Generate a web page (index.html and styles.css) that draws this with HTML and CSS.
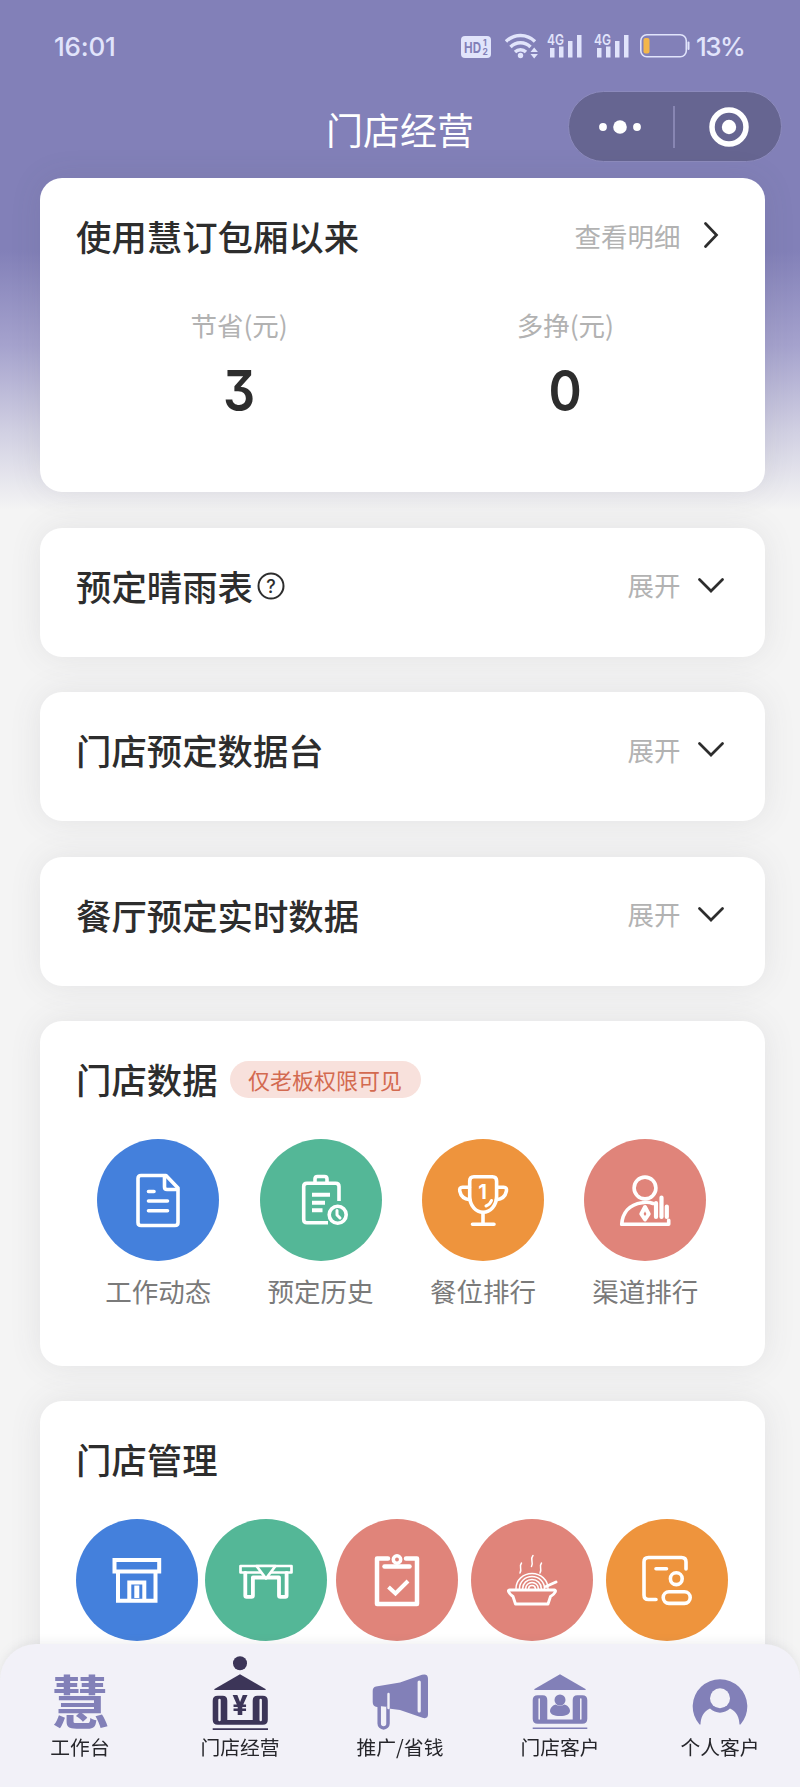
FILE: index.html
```html
<!DOCTYPE html>
<html lang="zh-CN">

<head>
    <meta charset="UTF-8">
    <title>门店经营</title>
    <link rel="stylesheet" href="styles.css">
</head>

<body>
    <header>
        <div class="status-bar">
            <span class="clock">16:01</span>
            <div class="status-icons">
                <svg class="hd" width="30" height="22" viewBox="0 0 30 22">
                    <rect width="30" height="22" rx="4" fill="#e1e4fb" />
                    <text x="3" y="16.5" font-size="15" font-weight="700" textLength="17" lengthAdjust="spacingAndGlyphs">HD</text>
                    <text x="22" y="10" font-size="8.5" font-weight="700">1</text>
                    <text x="21.5" y="19" font-size="8.5" font-weight="700">2</text>
                </svg>
                <svg class="wifi" width="34" height="26" viewBox="0 0 34 26">
                    <g fill="none" stroke="#e1e4fb" stroke-width="3.4">
                        <path d="M1 8.5a20.500 20.500 0 0 1 29 0" />
                        <path d="M5.500 14a14 14 0 0 1 20 0" />
                        <path d="M10 19a8 8 0 0 1 11 0" />
                    </g>
                    <circle cx="15.500" cy="22.500" r="2.700" fill="#e1e4fb" />
                    <path d="M25.500 19l3.700-4.500 3.700 4.500zM25.500 21l3.700 4.500 3.700-4.500z" fill="#e1e4fb" />
                </svg>
                <svg class="signal" width="35" height="33" viewBox="0 -4 35 33">
                    <text x="0" y="11.500" font-size="14.500" font-weight="600" textLength="17" lengthAdjust="spacingAndGlyphs">4G</text>
                    <path d="M3 15h4.500v9.500H3zM12 13.500h4.500v11H12zM21 8h4.500v16.500H21zM30 2h4.500v22.500H30z" />
                </svg>
                <svg class="signal" width="35" height="33" viewBox="0 -4 35 33">
                    <text x="0" y="11.500" font-size="14.500" font-weight="600" textLength="17" lengthAdjust="spacingAndGlyphs">4G</text>
                    <path d="M3 15h4.500v9.500H3zM12 13.500h4.500v11H12zM21 8h4.500v16.500H21zM30 2h4.500v22.500H30z" />
                </svg>
                <svg class="battery" width="50" height="24" viewBox="0 0 50 24">
                    <rect x="0.800" y="0.800" width="45.500" height="22" rx="6" fill="none" stroke="#e1e4fb" stroke-width="1.600" />
                    <rect x="3.500" y="4" width="6" height="15.500" rx="2" fill="#f3b64a" />
                    <rect x="47.500" y="7.500" width="2" height="8.500" rx="1" fill="#e1e4fb" />
                </svg>
                <span class="percent">13%</span>
            </div>
        </div>
        <div class="title-bar">
            <h1>门店经营</h1>
            <div class="capsule">
                <svg width="42" height="14" viewBox="0 0 42 14" fill="#fff">
                    <circle cx="4" cy="7" r="3.900" />
                    <circle cx="21" cy="7" r="6.800" />
                    <circle cx="38" cy="7" r="3.900" />
                </svg>
                <i class="divider"></i>
                <svg width="40" height="40" viewBox="0 0 40 40">
                    <circle cx="20" cy="20" r="17" fill="none" stroke="#fff" stroke-width="5.500" />
                    <circle cx="20" cy="20" r="7.200" fill="#fff" />
                </svg>
            </div>
        </div>
    </header>

    <main>
        <section class="card summary">
            <div class="card-head">
                <h2>使用慧订包厢以来</h2>
                <a class="more">查看明细
                    <svg width="26" height="26" viewBox="0 0 26 26"><path d="M7.500 1.500l11 11.500-11 11.500" /></svg>
                </a>
            </div>
            <div class="stats">
                <div>
                    <p>节省(元)</p>
                    <strong>3</strong>
                </div>
                <div>
                    <p>多挣(元)</p>
                    <strong>0</strong>
                </div>
            </div>
        </section>

        <section class="card fold">
            <div class="card-head">
                <h2>预定晴雨表</h2>
                <svg class="help" width="28" height="28" viewBox="0 0 28 28">
                    <circle cx="14" cy="14" r="12.500" />
                    <text x="14" y="20.500" text-anchor="middle">?</text>
                </svg>
                <a class="more">展开
                    <svg width="26" height="26" viewBox="0 0 26 26"><path d="M1.500 7.500l11.500 11.500 11.500-11.500" /></svg>
                </a>
            </div>
        </section>

        <section class="card fold">
            <div class="card-head">
                <h2>门店预定数据台</h2>
                <a class="more">展开
                    <svg width="26" height="26" viewBox="0 0 26 26"><path d="M1.500 7.500l11.500 11.500 11.500-11.500" /></svg>
                </a>
            </div>
        </section>

        <section class="card fold">
            <div class="card-head">
                <h2>餐厅预定实时数据</h2>
                <a class="more">展开
                    <svg width="26" height="26" viewBox="0 0 26 26"><path d="M1.500 7.500l11.500 11.500 11.500-11.500" /></svg>
                </a>
            </div>
        </section>

        <section class="card data">
            <div class="card-head">
                <h2>门店数据</h2>
                <span class="tag">仅老板权限可见</span>
            </div>
            <div class="data-grid">
                <div class="entry">
                    <div class="circle blue">
                        <svg viewBox="0 0 60 60">
                            <path d="M38 5.500H13q-3 0-3 3v44q0 3 3 3h34q3 0 3-3V18z" />
                            <path d="M36.500 6v11q0 2.500 2.500 2.500h10.500M20.500 21.500h5.500M20.500 31h19M20.500 40.700h19" />
                        </svg>
                    </div>
                    <span>工作动态</span>
                </div>
                <div class="entry">
                    <div class="circle green">
                        <svg viewBox="0 0 60 60">
                            <path d="M48 31V16.500q0-3.300-3.300-3.300H16q-3.300 0-3.300 3.300v33q0 3.300 3.300 3.300h21M24 13V9q0-2.500 2.500-2.500h7q2.500 0 2.500 2.500v4" stroke-linecap="butt" />
                            <path d="M21 24.700h18M21 32.700h13M21 40.300h10.500" stroke-linecap="butt" stroke-width="4" />
                            <circle cx="46.700" cy="44.700" r="8.500" />
                            <path d="M46 40.500v4.500l3 3" stroke-width="3" />
                        </svg>
                    </div>
                    <span>预定历史</span>
                </div>
                <div class="entry">
                    <div class="circle orange">
                        <svg viewBox="0 0 60 60">
                            <path d="M16.700 11q0-4.200 4.200-4.200h18.500q4.200 0 4.200 4.200v15c0 10-6.500 16.300-13.500 16.300s-13.400-6.300-13.400-16.300z" />
                            <path d="M16.500 17.200H9.500q-3.500 0-2.700 4c1 5 4.500 8 10 8.500M43.700 17.200h7q3.500 0 2.700 4c-1 5-4.500 8-10 8.500M30 42.500v11M19.500 54.200h21.500" />
                            <path d="M38.500 30.500q-1.500 4-5.500 5.500" stroke-width="3" />
                            <text x="29.500" y="28.500" font-size="20">1</text>
                        </svg>
                    </div>
                    <span>餐位排行</span>
                </div>
                <div class="entry">
                    <div class="circle pink">
                        <svg viewBox="0 0 60 60">
                            <circle cx="30" cy="18" r="10.900" />
                            <path d="M38 33.500c-3-1.200-7-1.700-11-.8C14 34.500 7.500 43 6.700 54.300h47v-4" />
                            <path d="M41 33v14M46.500 27.500v19.500M51.800 36.500v10.500" stroke-width="4.200" />
                            <path d="M30 37l-3.700 7 3.700 5.500 3.700-5.500z" stroke-width="4" />
                        </svg>
                    </div>
                    <span>渠道排行</span>
                </div>
            </div>
        </section>

        <section class="card manage">
            <div class="card-head">
                <h2>门店管理</h2>
            </div>
            <div class="manage-row">
                <div class="circle blue">
                    <svg viewBox="0 0 60 60" class="sharp">
                        <path d="M7.500 10h44.700v11.500H7.500zM11 21.500v29.300h37.500V21.500M22.300 50V32.500h15V50" />
                        <path d="M29.800 35.500v12.500" stroke-width="5" />
                    </svg>
                </div>
                <div class="circle green">
                    <svg viewBox="0 0 60 60">
                        <g stroke-width="2.700">
                            <path d="M4.500 16h51v6.500h-51z" />
                            <path d="M9.300 23v22.500q0 1.300 1.300 1.300h5q1.300 0 1.300-1.300V27.500H43v18q0 1.300 1.300 1.300h5q1.300 0 1.300-1.300V23" stroke-width="3.800" />
                            <path d="M20.500 16L30 28.500 39.500 16z" fill="#54b797" />
                        </g>
                    </svg>
                </div>
                <div class="circle pink">
                    <svg viewBox="0 0 60 60">
                        <g stroke-width="4.500">
                            <path d="M21 8.500H10v45.500h40V8.500H39" />
                            <path d="M17.500 16.500h25" />
                            <circle cx="30" cy="9.500" r="3.700" stroke-width="3.500" />
                            <path d="M21.500 37l7 6.500L41 31" class="sharp" />
                        </g>
                    </svg>
                </div>
                <div class="circle pink">
                    <svg viewBox="0 0 60 60">
                        <path d="M7.500 40h45c2 0 1 3.500-4 6.500l-2.500 7.500H13.500L11 46.500c-4-3-6-6.500-3.500-6.500z" stroke-width="2.900" />
                        <g stroke-width="1.500">
                            <path d="M14 38.500a16 15 0 0 1 32 0M17.500 38.500a12.500 12 0 0 1 25 0M20.700 38.500a9.300 9 0 0 1 18.600 0M23.700 38.500a6.300 6 0 0 1 12.600 0M26.700 38.500a3.300 3 0 0 1 6.600 0" />
                            <path d="M19.500 13c-3 4 1 5-1.500 10M31 5.500c-3.500 4 1 6-1.500 11M39.500 13c-3 4 1 5-1.500 10" />
                        </g>
                        <path d="M44 36.500l10-4.500" stroke-width="3" />
                    </svg>
                </div>
                <div class="circle orange">
                    <svg viewBox="0 0 60 60">
                        <path d="M49 19V12q0-4.500-4.500-4.500H11.500Q7 7.500 7 12v33q0 4.500 4.500 4.500h7.500M19 18.700h10.500" />
                        <circle cx="39.300" cy="28.700" r="5.900" />
                        <rect x="26.200" y="41.700" width="27" height="11.700" rx="5.800" />
                    </svg>
                </div>
            </div>
        </section>
    </main>

    <nav>
        <a>
            <b class="logo">慧</b>
            <span>工作台</span>
        </a>
        <a class="active">
            <svg viewBox="0 0 60 76">
                <circle cx="30" cy="8.300" r="7" />
                <path d="M30 19.300L55.500 34q1 1-.5 1H5q-1.500 0-.5-1z" />
                <path d="M7.700 40.700h5q4.600 0 4.600 5V65h25.400V45.700q0-5 4.600-5h5.500q5 0 5 5v19q0 5-5 5H7.700q-5 0-5-5v-19q0-5 5-5z" />
                <path d="M9.500 45v20M50.700 45v20" class="slit" />
                <path d="M2.700 73.300h55.300v1.700H2.700z" />
                <text x="30" y="60" font-size="27" font-weight="800" text-anchor="middle">¥</text>
            </svg>
            <span>门店经营</span>
        </a>
        <a>
            <svg viewBox="0 0 60 76">
                <path d="M6 31.500L30 27.500 52 19.800q6-1.500 6 4v35.500q0 5-5.500 3.500L30 55 7 52q-4.300-.5-4.300-5V36q0-4 3.300-4.500z" />
                <path d="M49.200 27v29" class="slit thick" />
                <path d="M9.200 51v17.500a4.400 4.400 0 0 0 8.800 0V52" fill="#f2f1f8" stroke="#8280b8" stroke-width="3.500" />
                <path d="M18.500 39v14" class="slit" />
            </svg>
            <span>推广/省钱</span>
        </a>
        <a>
            <svg viewBox="0 0 60 76">
                <path d="M30 19.300L55.500 34q1 1-.5 1H5q-1.500 0-.5-1z" />
                <path d="M7.700 40.200h5q4.600 0 4.600 5V64.500h25.400V45.200q0-5 4.600-5h5q5 0 5 5v18.500q0 5-5 5H7.700q-5 0-5-5V45.200q0-5 5-5z" />
                <path d="M9.200 44v20M50.800 44v20" class="slit thin" />
                <path d="M2.700 72.500h54.600v1.500H2.700z" />
                <circle cx="30" cy="45" r="5.500" />
                <path d="M25.500 49.500q4.500 2.500 9 0c3.500 1 5.500 4 5.500 6.500 0 3-4 5-10 5s-10-2-10-5c0-2.500 2-5.500 5.500-6.500z" />
            </svg>
            <span>门店客户</span>
        </a>
        <a>
            <svg viewBox="0 0 60 76">
                <path d="M9.500 69.500a27.300 27.300 0 1 1 41 0z" />
                <circle cx="30" cy="43.300" r="10" fill="#f2f1f8" />
                <path d="M10.500 70c0-7 3-14 9.500-16.500 5.500 5.500 14.500 5.500 20 0 6.500 2.500 9.500 9.500 9.500 16.500z" fill="#f2f1f8" />
            </svg>
            <span>个人客户</span>
        </a>
    </nav>
</body>

</html>
```
FILE: styles.css
```css
* {
    box-sizing: border-box;
}

body {
    margin: 0;
    height: 1787px;
    overflow: hidden;
    font-family: "Noto Sans CJK SC", sans-serif;
    color: #2d2d2d;
    background: linear-gradient(#8280b8 0, #8280b8 250px, #a5a2cd 345px, #d0cfe2 430px, #f4f4f4 510px);
}

h1,
h2,
p {
    margin: 0;
    font-weight: 400;
}

svg {
    display: block;
    flex: none;
}

/* header */
header {
    height: 178px;
    color: #fff;
}

.status-bar {
    display: flex;
    justify-content: space-between;
    height: 91px;
    padding: 0 56px 0 54px;
    align-items: center;
    color: #e1e4fb;
    font: 500 26px/32px Inter, sans-serif;
}

.clock {
    margin-top: 2px;
    letter-spacing: -0.2px;
}

.status-icons {
    display: flex;
    align-items: center;
}

.status-icons text {
    font-family: Inter, sans-serif;
}

.hd {
    margin: 2px 14px 0 0;
    fill: #8280b8;
}

.wifi {
    margin-right: 8px;
}

.signal {
    margin-right: 12px;
    fill: #e1e4fb;
}

.battery {
    margin: 1px 6px 0 -1px;
}

.percent {
    margin-top: 2px;
    width: 48px;
    letter-spacing: -1.6px;
}

.title-bar {
    display: grid;
    grid-template-columns: 1fr auto 1fr;
    height: 72px;
    padding-right: 18px;
    align-items: center;
}

h1 {
    grid-column: 2;
    padding: 3px 0 0 18px;
    font-size: 37px;
    line-height: 46px;
}

.capsule {
    justify-self: end;
    display: flex;
    align-items: center;
    width: 214px;
    height: 71px;
    margin-top: -1px;
    padding: 0 30px;
    border: 1.500px solid #8c8abc;
    border-radius: 36px;
    background: #666591;
}

.divider {
    width: 1.500px;
    height: 42px;
    margin: 0 34px 0 32px;
    background: #8886b3;
}

/* cards */
main {
    display: flex;
    flex-direction: column;
    gap: 35.600px;
    padding: 0 35.500px 0 40px;
}

.card {
    flex: none;
    padding: 34px 36px 0;
    border-radius: 22px;
    background: #fff;
    box-shadow: 0 0 32px rgba(80, 80, 90, 0.1);
}

.summary {
    height: 314px;
}

.fold {
    height: 129px;
}

.data {
    height: 344.500px;
}

.manage {
    height: 420px;
}

.card-head {
    display: flex;
    align-items: center;
    height: 48px;
}

h2 {
    font-size: 35.400px;
    line-height: 48px;
    font-weight: 500;
}

.more {
    display: flex;
    align-items: center;
    gap: 17px;
    margin: -2px 5px 0 auto;
    font-size: 26.500px;
    color: #b2b2b2;
}

.more svg {
    fill: none;
    stroke: #2d2d2d;
    stroke-width: 2.700;
    stroke-linecap: round;
}

.help {
    margin: 1px 0 0 4px;
    fill: none;
    stroke: #2d2d2d;
    stroke-width: 2;
}

.help text {
    font: 500 18px Inter, sans-serif;
    fill: #2d2d2d;
    stroke: none;
}

.stats {
    display: grid;
    grid-template-columns: 1fr 1fr;
    padding-top: 47px;
    text-align: center;
}

.stats p {
    font-size: 26.500px;
    line-height: 36px;
    color: #b2b2b2;
}

.stats strong {
    display: block;
    margin-top: 20px;
    font: 600 56px/56px Inter, sans-serif;
    transform: scaleX(0.9);
    /* flat-top three */
    font-feature-settings: "cv09";
}

.tag {
    margin: 1px 0 0 12px;
    width: 191px;
    border-radius: 19px;
    font-size: 22px;
    line-height: 37px;
    text-align: center;
    color: #d36a50;
    background: #f8e1dc;
}

/* round icons */
.circle {
    display: flex;
    align-items: center;
    justify-content: center;
    width: 122px;
    height: 122px;
    border-radius: 50%;
}

.circle svg {
    width: 60px;
    height: 60px;
    fill: none;
    stroke: #fff;
    stroke-width: 3.600;
    stroke-linecap: round;
    stroke-linejoin: round;
}

.circle svg.sharp,
.circle .sharp {
    stroke-width: 4;
    stroke-linecap: butt;
    stroke-linejoin: miter;
}

.circle text {
    font-family: Inter, sans-serif;
    font-weight: 700;
    text-anchor: middle;
    fill: #fff;
    stroke: none;
}

.blue {
    background: #4480dc;
}

.green {
    background: #54b797;
}

.orange {
    background: #ee943d;
}

.pink {
    background: #e0847a;
}

.data-grid {
    display: grid;
    grid-template-columns: repeat(4, 1fr);
    padding-top: 36px;
    margin: 0 2px 0 1px;
}

.entry {
    display: flex;
    flex-direction: column;
    align-items: center;
    gap: 12px;
    font-size: 26.500px;
    line-height: 36px;
    color: #7a7a7a;
}

.manage-row {
    display: grid;
    grid-template-columns: 129.500px 130.500px 135.300px 135.700px 122px;
    padding-top: 36px;
    margin-left: -0.500px;
}

/* bottom tabs */
nav {
    position: fixed;
    left: 0;
    right: 0;
    bottom: 0;
    height: 143px;
    display: grid;
    grid-template-columns: repeat(5, 1fr);
    padding-top: 11px;
    border-radius: 36px 36px 0 0;
    background: #f2f1f8;
    box-shadow: 0 -2px 10px rgba(120, 120, 130, 0.12);
}

nav a {
    display: flex;
    flex-direction: column;
    align-items: center;
    font-size: 19.800px;
    line-height: 28px;
    color: #26262b;
}

nav svg {
    width: 60px;
    height: 76px;
    fill: #8280b8;
}

nav span {
    margin-top: 2px;
}

.active svg {
    fill: #3c3558;
}

nav text {
    font-family: Inter, sans-serif;
}

.slit {
    fill: none;
    stroke: #f2f1f8;
    stroke-width: 2.400;
    stroke-linecap: round;
}

.thick {
    stroke-width: 3.200;
}

.thin {
    stroke-width: 1.500;
}

.logo {
    height: 76px;
    padding-top: 14px;
    font-size: 58px;
    line-height: 60px;
    font-weight: 700;
    color: #8280b8;
}
```
